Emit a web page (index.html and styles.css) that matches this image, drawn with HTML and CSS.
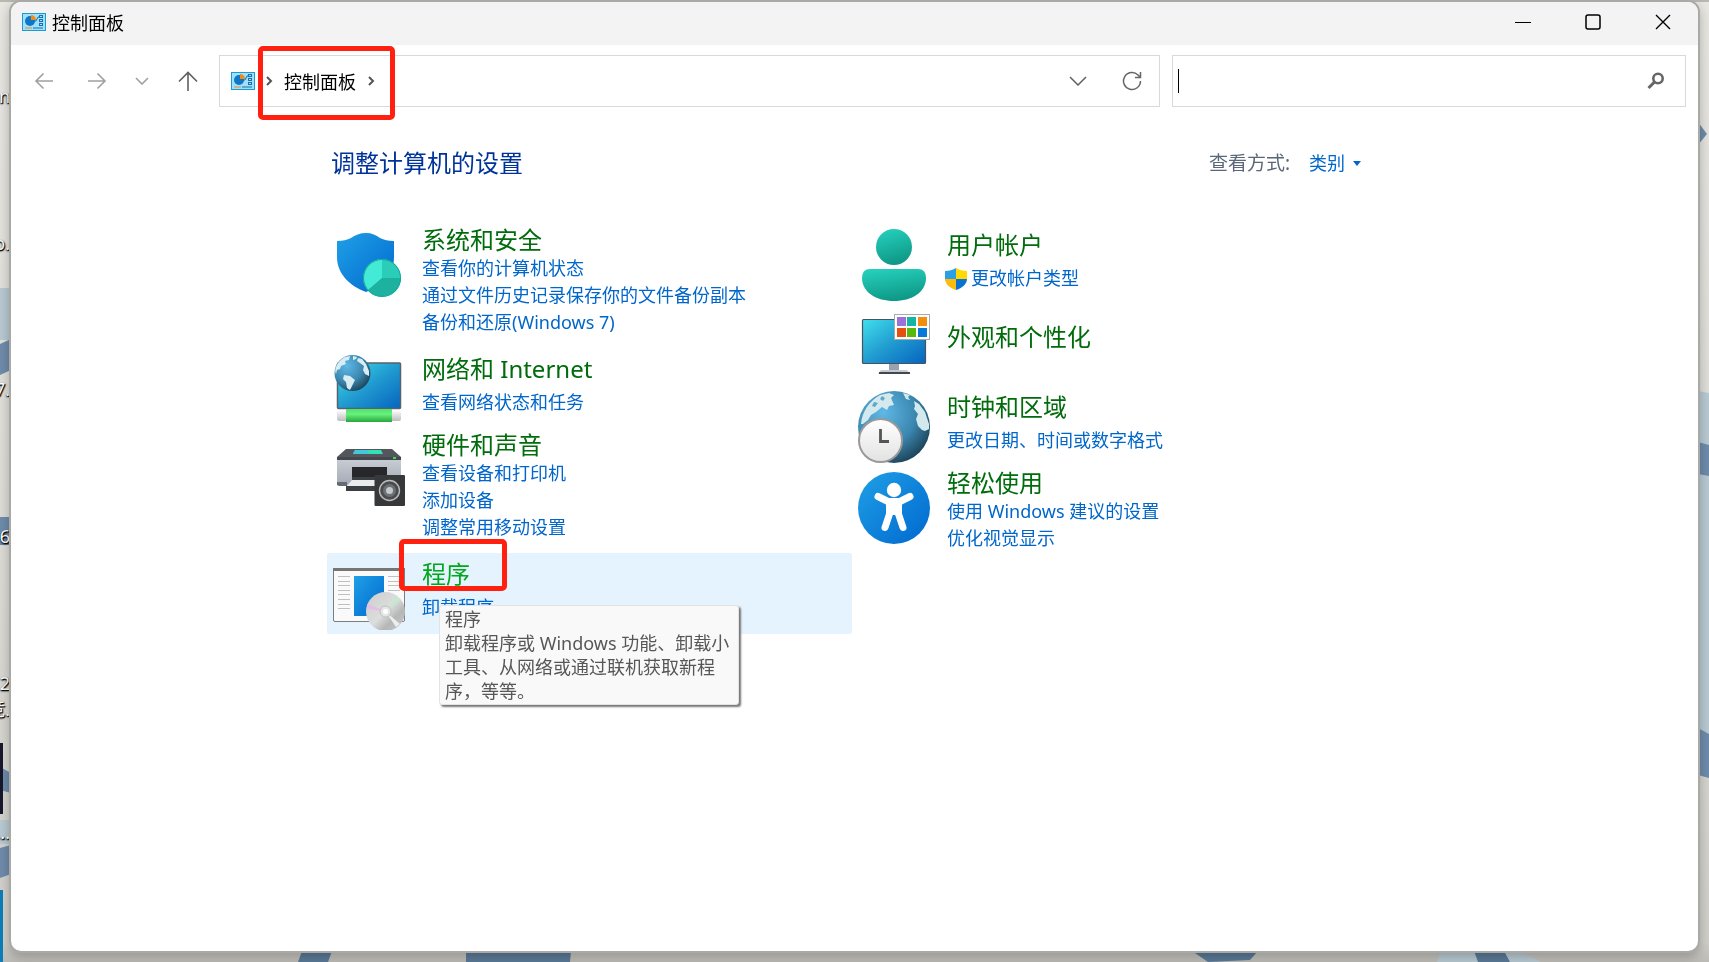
FILE: index.html
```html
<!DOCTYPE html>
<html lang="zh-CN">
<head>
    <meta charset="UTF-8">
    <meta name="viewport" content="width=device-width, initial-scale=1.0">
    <title>控制面板</title>
    <link rel="stylesheet" href="styles.css">
</head>
<body>
    <!-- desktop behind the window -->
    <div class="desktop">
        <svg class="wallpaper" viewBox="0 0 1709 962" preserveAspectRatio="none" aria-hidden="true">
            <path d="M0 0h1709v2H0z" fill="#b9b8b2"/>
            <g fill="#7b8b9b">
                <path d="M280 0h27v3h-31zM1135 0h40v3h-38zM1450 0h36l-6 3h-32zM1541 0h32l2 3h-30z"/>
            </g>
            <path d="M550 0h80v3h-80z" fill="#b79c9b"/>
            <path d="M1193 0h94v3h-94zM1395 0h30v3h-30z" fill="#b5b193"/>
            <path d="M0 288h11v52H0zM0 820h11v24H0zM1698 391l11 2v352h-11zM1441 951h78l22 11h-104z" fill="#b9cad3"/>
            <g fill="#6f8cab">
                <path d="M0 344l11-5v31l-11 5zM0 517h11v28H0zM0 767l11 6v20l-11-3zM0 848l11-3v29l-11 4z"/>
                <path d="M1698 122l9 12-9 11zM1698 442l11 3v31l-11-2zM1698 728l11 6v44l-11-3z"/>
                <path d="M302 951h30l-4 11h-30zM466 951h105l-1 11H466zM1192 951h66l-8 9-42 2zM1474 951h30l6 11h-32z" fill="#5b7a98"/>
            </g>
            <path d="M0 743h3v71H0z" fill="#17182c"/>
            <path d="M0 890h3v72H0z" fill="#0c7fb8"/>
        </svg>
        <span class="desktop-label label-1">n</span>
        <span class="desktop-label label-2">o.</span>
        <span class="desktop-label label-3">7.</span>
        <span class="desktop-label label-4">6</span>
        <span class="desktop-label label-5">2</span>
        <span class="desktop-label label-6">竞.</span>
        <span class="desktop-label label-7">...</span>
    </div>

    <!-- shared icons -->
    <svg class="defs" aria-hidden="true">
        <defs>
            <linearGradient id="blue" x1="0" y1="0" x2="1" y2="1">
                <stop offset="0" stop-color="#1fa0e6"/>
                <stop offset="1" stop-color="#0068cf"/>
            </linearGradient>
            <linearGradient id="screen" x1="0" y1="0" x2="1" y2="1">
                <stop offset="0" stop-color="#3fe0ec"/>
                <stop offset="0.5" stop-color="#219bd0"/>
                <stop offset="1" stop-color="#0564c0"/>
            </linearGradient>
            <linearGradient id="teal" x1="0" y1="0" x2="0.3" y2="1">
                <stop offset="0" stop-color="#27d3c0"/>
                <stop offset="1" stop-color="#0f9a88"/>
            </linearGradient>
            <radialGradient id="sea" cx="0.35" cy="0.3" r="0.75">
                <stop offset="0" stop-color="#5fb8e6"/>
                <stop offset="0.6" stop-color="#3b87b0"/>
                <stop offset="1" stop-color="#1d4459"/>
            </radialGradient>
            <linearGradient id="pipe" x1="0" y1="0" x2="0" y2="1">
                <stop offset="0" stop-color="#54e070"/>
                <stop offset="0.4" stop-color="#66f27c"/>
                <stop offset="1" stop-color="#28a63c"/>
            </linearGradient>
            <linearGradient id="metal" x1="0" y1="0" x2="0" y2="1">
                <stop offset="0" stop-color="#ffffff"/>
                <stop offset="1" stop-color="#bdbdbd"/>
            </linearGradient>
            <linearGradient id="face" x1="0" y1="0" x2="0" y2="1">
                <stop offset="0" stop-color="#ffffff"/>
                <stop offset="1" stop-color="#e2e2e2"/>
            </linearGradient>
            <linearGradient id="grey" x1="0" y1="0" x2="0" y2="1">
                <stop offset="0" stop-color="#c9ced6"/>
                <stop offset="1" stop-color="#a3a9b3"/>
            </linearGradient>
            <linearGradient id="disc" x1="0" y1="0" x2="1" y2="1">
                <stop offset="0" stop-color="#cccccc"/>
                <stop offset="0.5" stop-color="#dcdedd"/>
                <stop offset="0.7" stop-color="#b4b7b6"/>
                <stop offset="1" stop-color="#c9cbca"/>
            </linearGradient>
            <symbol id="cpanel" viewBox="0 0 24 18">
                <rect x="0.5" y="0.5" width="23" height="17" fill="#9fe0fa" stroke="#1c9ad6"/>
                <circle cx="8" cy="8" r="5" fill="#0f77c8"/>
                <path d="M9 7V2a5 5 0 0 1 5 5z" fill="#f08c14"/>
                <path d="M12 8h2l2-4h1" fill="none" stroke="#1c6fae"/>
                <g fill="none" stroke="#1c6fae">
                    <rect x="17.5" y="2.5" width="3" height="2"/>
                    <rect x="17.5" y="6.5" width="3" height="2"/>
                    <rect x="17.5" y="10.5" width="3" height="2"/>
                </g>
                <path d="M3 15h7" stroke="#f08c14"/>
                <path d="M11 15h10" stroke="#1c6fae"/>
            </symbol>
        </defs>
    </svg>

    <div class="window">
        <header class="titlebar">
            <svg class="cpanel-icon" aria-hidden="true"><use href="#cpanel"/></svg>
            <span class="window-title">控制面板</span>
            <div class="window-buttons">
                <button type="button" aria-label="最小化">
                    <svg width="16" height="16"><path d="M0 8.5h16" stroke="#000"/></svg>
                </button>
                <button type="button" aria-label="最大化">
                    <svg width="16" height="16"><rect x="1" y="1" width="14" height="14" rx="2" fill="none" stroke="#000" stroke-width="1.5"/></svg>
                </button>
                <button type="button" aria-label="关闭">
                    <svg width="16" height="16"><path d="M1 1l14 14M15 1L1 15" stroke="#000" stroke-width="1.4"/></svg>
                </button>
            </div>
        </header>

        <nav class="toolbar">
            <div class="nav-buttons">
                <button type="button" class="nav-back" aria-label="后退">
                    <svg width="20" height="18"><path d="M19 9H2M9.500 1.500L2 9l7.500 7.500" fill="none" stroke="#a0a0a0" stroke-width="1.600"/></svg>
                </button>
                <button type="button" class="nav-forward" aria-label="前进">
                    <svg width="20" height="18"><path d="M1 9h17M10.500 1.500L18 9l-7.500 7.500" fill="none" stroke="#a0a0a0" stroke-width="1.600"/></svg>
                </button>
                <button type="button" class="nav-recent" aria-label="最近浏览的位置">
                    <svg width="14" height="8"><path d="M1 1l6 6 6-6" fill="none" stroke="#a0a0a0" stroke-width="1.600"/></svg>
                </button>
                <button type="button" class="nav-up" aria-label="上移">
                    <svg width="20" height="20"><path d="M10 20V2M1 10.500L10 1.500l9 9" fill="none" stroke="#606060" stroke-width="1.600"/></svg>
                </button>
            </div>
            <div class="address">
                <svg class="cpanel-icon" aria-hidden="true"><use href="#cpanel"/></svg>
                <div class="crumbs">
                    <svg width="8" height="12"><path d="M2 2L6 6l-4 4" fill="none" stroke="#555" stroke-width="2"/></svg>
                    <a href="#">控制面板</a>
                    <svg width="8" height="12"><path d="M2 2L6 6l-4 4" fill="none" stroke="#555" stroke-width="2"/></svg>
                    <span class="mark"></span>
                </div>
                <button type="button" class="address-list" aria-label="以前的位置">
                    <svg width="18" height="10"><path d="M1 1l8 8 8-8" fill="none" stroke="#606060" stroke-width="1.500"/></svg>
                </button>
                <button type="button" class="address-refresh" aria-label="刷新">
                    <svg width="20" height="20"><path d="M18.500 10a8.500 8.500 0 1 1-2.500-6l2 2M18.500 1v5.500H13" fill="none" stroke="#666" stroke-width="1.500"/></svg>
                </button>
            </div>
            <div class="search">
                <span class="caret"></span>
                <input type="text" aria-label="搜索控制面板">
                <svg width="18" height="18" aria-hidden="true"><circle cx="11" cy="6.500" r="4.700" fill="none" stroke="#666" stroke-width="2.600"/><path d="M7.500 10L1.500 16" stroke="#666" stroke-width="3"/></svg>
            </div>
        </nav>

        <main class="content">
            <div class="heading">
                <h1>调整计算机的设置</h1>
                <div class="view-by">
                    <label for="view">查看方式:</label>
                    <select id="view">
                        <option>类别</option>
                    </select>
                    <svg width="8" height="5" aria-hidden="true"><path d="M0 0h8L4 5z" fill="#0066cc"/></svg>
                </div>
            </div>

            <div class="categories">
                <div class="column">
                    <section class="category">
                        <svg class="category-icon" viewBox="0 0 72 72" aria-hidden="true">
                            <path d="M33 4c6 0 10 2 14 5 4 2 8 3 14 3v16c0 17-12 29-28 35C17 57 4 45 4 28V12c6 0 10-1 14-3 4-3 9-5 15-5z" fill="url(#blue)"/>
                            <circle cx="49" cy="49" r="19" fill="#2bcdb9"/>
                            <path d="M49 49V30a19 19 0 0 0-14 31z" fill="#43ead6"/>
                            <path d="M49 49h19a19 19 0 0 1-33 12z" fill="#1cb29f"/>
                            <circle cx="49" cy="49" r="18.500" fill="none" stroke="#1ba795"/>
                        </svg>
                        <div class="category-text">
                            <h2><a href="#">系统和安全</a></h2>
                            <a href="#">查看你的计算机状态</a>
                            <a href="#">通过文件历史记录保存你的文件备份副本</a>
                            <a href="#">备份和还原(Windows 7)</a>
                        </div>
                    </section>

                    <section class="category single">
                        <svg class="category-icon" viewBox="0 0 72 72" aria-hidden="true">
                            <rect x="4.500" y="10" width="63" height="45.500" rx="1" fill="url(#screen)" stroke="#56636c" stroke-width="1.500"/>
                            <rect x="4" y="57" width="64" height="11" rx="2" fill="url(#metal)"/>
                            <rect x="13" y="56" width="46" height="13" fill="url(#pipe)"/>
                            <circle cx="19.500" cy="20" r="18" fill="url(#sea)"/>
                            <path d="M3 14c2-5 5-8 9-10l5-1-1 4-4 1 1 3-5 2-1 3-3 1-1 4c-1-2-1-4 0-7zM20 3l4 1-1 2-3 1zM25 5l4 1 4 5 3 7 0 5-4-2-2-4 1-4-4-3-3-2zM11 22l6 1 5 4-2 4-3 6-3-2-1-6-3-3z" fill="#d9ecf3"/>
                        </svg>
                        <div class="category-text">
                            <h2><a href="#">网络和 Internet</a></h2>
                            <a href="#">查看网络状态和任务</a>
                        </div>
                    </section>

                    <section class="category">
                        <svg class="category-icon" viewBox="0 0 72 72" aria-hidden="true">
                            <path d="M4 24h64v25l-3 3H7l-3-3z" fill="url(#grey)"/>
                            <path d="M4 48h10v4H6l-2-1z" fill="#666b73"/>
                            <path d="M13 15h46l9 8v3H4v-3z" fill="#53575d"/>
                            <path d="M22 16h26l2 4H20z" fill="#36e0b5"/>
                            <path d="M22 16h13l1 4H20z" fill="#42c8d8"/>
                            <path d="M4 23h64v3H4z" fill="#44474d"/>
                            <rect x="60" y="23" width="3" height="2" fill="#37e32b"/>
                            <path d="M19 33h35v15H19z" fill="#25272b"/>
                            <path d="M19 43h35v4H19z" fill="#3c3f44"/>
                            <path d="M19 46h24v7H13z" fill="#e9ebed"/>
                            <path d="M13 52h30v5H13z" fill="#3b3e43"/>
                            <rect x="41.500" y="41" width="30.500" height="31" rx="1" fill="#37383a"/>
                            <circle cx="56.500" cy="56.500" r="10" fill="#4a4b4d" stroke="#b9bcbf" stroke-width="1.400"/>
                            <circle cx="56.500" cy="56.500" r="6.500" fill="#6c7075"/>
                            <circle cx="56.500" cy="56.500" r="3.500" fill="#c3c8cd"/>
                        </svg>
                        <div class="category-text">
                            <h2><a href="#">硬件和声音</a></h2>
                            <a href="#">查看设备和打印机</a>
                            <a href="#">添加设备</a>
                            <a href="#">调整常用移动设置</a>
                        </div>
                    </section>

                    <section class="category single active">
                        <svg class="category-icon" viewBox="0 0 72 72" aria-hidden="true">
                            <rect x="0.500" y="10.500" width="71" height="53" rx="1.500" fill="#fafafa" stroke="#7d7d7d"/>
                            <path d="M0 10h72v3H0z" fill="#757575"/>
                            <path d="M5 18.500h12M5 23.500h12M5 27.500h12M5 32.500h12M5 36.500h12M5 41.500h12M5 46.500h12M5 50.500h12M55 18.500h12M55 23.500h12M55 27.500h12M55 32.500h12" stroke="#c0c0c0"/>
                            <rect x="21" y="18" width="30" height="40" fill="url(#blue)"/>
                            <circle cx="52.500" cy="53.500" r="19.500" fill="url(#disc)"/>
                            <path d="M52 53L34 46v5z" fill="#e5bde5"/>
                            <path d="M53 53l11-14 3 3z" fill="#bdecc8"/>
                            <path d="M53 54l14 12-4 3z" fill="#eeeeee"/>
                            <circle cx="52.500" cy="53.500" r="5.500" fill="#e6e6e6" stroke="#bdbdbd"/>
                            <circle cx="52.500" cy="53.500" r="2.500" fill="#fff"/>
                        </svg>
                        <div class="category-text">
                            <h2><a href="#">程序</a></h2>
                            <a href="#">卸载程序</a>
                            <span class="mark"></span>
                            <div class="tooltip" role="tooltip">程序<br>卸载程序或 Windows 功能、卸载小<br>工具、从网络或通过联机获取新程<br>序，等等。</div>
                        </div>
                    </section>
                </div>

                <div class="column">
                    <section class="category single">
                        <svg class="category-icon" viewBox="0 0 72 72" aria-hidden="true">
                            <circle cx="36" cy="18" r="18" fill="url(#teal)"/>
                            <path d="M12 40h48q8 0 8 9c0 14-14 23-32 23S4 63 4 49q0-9 8-9z" fill="url(#teal)"/>
                        </svg>
                        <div class="category-text">
                            <h2><a href="#">用户帐户</a></h2>
                            <a href="#" class="with-shield">
                                <svg width="22" height="22" aria-hidden="true">
                                    <path d="M11 0C8 2 4 3 0 3v8h11z" fill="#2a9fe6"/>
                                    <path d="M11 0c3 2 7 3 11 3v8H11z" fill="#ffd900"/>
                                    <path d="M0 11c0 5 5 9 11 11V11z" fill="#fcbc0b"/>
                                    <path d="M22 11c0 5-5 9-11 11V11z" fill="#0b72cf"/>
                                </svg>更改帐户类型</a>
                        </div>
                    </section>

                    <section class="category bare">
                        <svg class="category-icon" viewBox="0 0 72 72" aria-hidden="true">
                            <path d="M31 54h10v7H31z" fill="#9aa3ad"/>
                            <path d="M23 60h26l3 4H20z" fill="#c4cad0"/>
                            <path d="M21 62h31v2H21z" fill="#3f4850"/>
                            <rect x="4.500" y="9.500" width="63" height="44" rx="1" fill="url(#screen)" stroke="#47545d" stroke-width="1.200"/>
                            <rect x="36.500" y="4.500" width="35" height="25" fill="#fff" stroke="#a9a9a9"/>
                            <path d="M39 7h9v9h-9z" fill="#9d72d8"/>
                            <path d="M49 7h9v9h-9z" fill="#16b5a2"/>
                            <path d="M60 7h9v9h-9z" fill="#f28d0d"/>
                            <path d="M39 18h9v9h-9z" fill="#e35010"/>
                            <path d="M49 18h9v9h-9z" fill="#59b80c"/>
                            <path d="M60 18h9v9h-9z" fill="#0879d6"/>
                        </svg>
                        <div class="category-text">
                            <h2><a href="#">外观和个性化</a></h2>
                        </div>
                    </section>

                    <section class="category single">
                        <svg class="category-icon" viewBox="0 0 72 72" aria-hidden="true">
                            <circle cx="36" cy="36" r="36" fill="url(#sea)"/>
                            <path d="M3 33C4 21 11 10 22 4l9-2 5 2-3 3 3 7-5 1-2 4-5-3-6 5-5 3-3 5-5 4zM45 2l7 2-2 2 2 3-4-1zM56 10l5 3 6 8 4 12 0 5-4 2-3-1-4-4-2-7 2-5-4-5 1-3z" fill="#d3e9ee"/>
                            <path d="M24 5l3 2-2 3-3-2zM16 11l4 1-3 4-3-1z" fill="#5fa8c8"/>
                            <circle cx="22.500" cy="49.500" r="21.500" fill="url(#face)" stroke="#999" stroke-width="2"/>
                            <path d="M22.500 38v12.500H31" fill="none" stroke="#555" stroke-width="2.800"/>
                        </svg>
                        <div class="category-text">
                            <h2><a href="#">时钟和区域</a></h2>
                            <a href="#">更改日期、时间或数字格式</a>
                        </div>
                    </section>

                    <section class="category">
                        <svg class="category-icon" viewBox="0 0 72 72" aria-hidden="true">
                            <circle cx="36" cy="36" r="36" fill="url(#blue)"/>
                            <circle cx="36" cy="18" r="7.200" fill="#fff"/>
                            <path d="M20 24.500l10 5h12l10-5" fill="none" stroke="#fff" stroke-width="7" stroke-linecap="round" stroke-linejoin="round"/>
                            <path d="M28 28h16v15H28z" fill="#fff"/>
                            <path d="M31.500 42L27 55.500M40.500 42L45 55.500" stroke="#fff" stroke-width="7" stroke-linecap="round"/>
                        </svg>
                        <div class="category-text">
                            <h2><a href="#">轻松使用</a></h2>
                            <a href="#">使用 Windows 建议的设置</a>
                            <a href="#">优化视觉显示</a>
                        </div>
                    </section>
                </div>
            </div>
        </main>
    </div>
</body>
</html>
```
FILE: styles.css
```css
* {
    box-sizing: border-box;
}
body {
    margin: 0;
    padding: 0 9px 9px;
    font-family: "Noto Sans", "Noto Sans CJK SC", sans-serif;
    font-size: 18px;
    background: #dddbd6;
}
a {
    color: #0066cc;
    text-decoration: none;
}
button {
    display: flex;
    align-items: center;
    justify-content: center;
    padding: 0;
    border: 0;
    background: none;
}
.defs {
    position: absolute;
    width: 0;
    height: 0;
}

/* desktop */
.desktop {
    position: fixed;
    inset: 0;
    overflow: hidden;
    background: linear-gradient(#e9e7e2, #dddbd6 60%, #d0cfca 98%, #bcbbb6);
}
.wallpaper {
    width: 100%;
    height: 100%;
}
.desktop-label {
    position: absolute;
    right: calc(100% - 10px);
    color: #fff;
    font-size: 18px;
    line-height: 20px;
    white-space: nowrap;
    text-shadow: 0 1px 2px #000, 1px 1px 1px #000;
}
.label-1 { top: 86px; }
.label-2 { top: 233px; }
.label-3 { top: 379px; }
.label-4 { top: 526px; }
.label-5 { top: 673px; }
.label-6 { top: 699px; }
.label-7 { top: 822px; }

/* window */
.window {
    position: relative;
    min-height: calc(100vh - 9px);
    border: 2px solid #a9a9a6;
    border-radius: 12px;
    background: #fff;
    box-shadow: 0 4px 12px rgba(0, 0, 0, 0.25);
}
.titlebar {
    display: flex;
    align-items: center;
    height: 43px;
    padding: 0 0 3px 11px;
    border-radius: 10px 10px 0 0;
    background: #f3f3f3;
}
.cpanel-icon {
    flex: none;
    width: 24px;
    height: 18px;
}
.window-title {
    margin-left: 6px;
    color: #000;
}
.window-buttons {
    display: flex;
    margin-left: auto;
}
.window-buttons button {
    width: 70px;
    height: 40px;
}

/* toolbar */
.toolbar {
    display: grid;
    grid-template-columns: auto 953fr 514fr;
    padding: 10px 12px 0 6px;
}
.nav-buttons {
    display: flex;
    margin-right: 3px;
}
.nav-back,
.nav-forward {
    width: 53px;
}
.nav-recent {
    width: 37px;
}
.nav-up {
    width: 56px;
}
.address,
.search {
    display: flex;
    align-items: center;
    height: 52px;
    border: 1px solid #d9d9d9;
}
.address {
    margin-right: 12px;
    padding-left: 11px;
}
.crumbs {
    position: relative;
    display: flex;
    align-items: center;
    gap: 11px;
    height: 50px;
    margin: 0 auto 0 10px;
}
.crumbs a {
    color: #000;
}
.mark {
    position: absolute;
    border: 5px solid #ff2010;
    border-radius: 5px;
    pointer-events: none;
}
.crumbs .mark {
    inset: -10px -20px -14px -7px;
}
.address button {
    width: 54px;
    height: 50px;
}
.search {
    padding: 0 20px 0 5px;
}
.caret {
    width: 1px;
    height: 24px;
    background: #000;
}
.search input {
    flex: 1;
    min-width: 0;
    height: 40px;
    padding: 0 4px;
    border: 0;
    outline: 0;
    font: inherit;
}

/* content */
.content {
    max-width: 1055px;
    margin: 0 auto;
    padding: 38px 5px 40px 0;
}
.heading {
    display: flex;
    align-items: center;
    justify-content: space-between;
    padding: 0 16px 0 4px;
}
h1,
h2 {
    margin: 0;
    font-size: 24px;
    font-weight: 400;
}
h1 {
    line-height: 36px;
    color: #003399;
}
.view-by {
    display: flex;
    align-items: center;
}
.view-by label {
    color: #5a6778;
    font-size: 19px;
    line-height: 24px;
}
.view-by select {
    appearance: none;
    margin: 0 8px 0 19px;
    padding: 0;
    border: 0;
    background: none;
    color: #0066cc;
    font: inherit;
}
.categories {
    display: flex;
    margin-top: 43px;
}
.column {
    flex: 1;
}
.category {
    display: flex;
    gap: 17px;
    min-height: 81px;
    padding: 0 6px;
    border-radius: 2px;
}
.category-icon {
    flex: none;
    width: 72px;
    height: 72px;
    margin-top: 5px;
}
.category-text {
    position: relative;
    display: flex;
    flex-direction: column;
    align-items: flex-start;
    padding: 1px 0 12px;
    line-height: 27px;
}
.category-text h2 {
    line-height: 30px;
}
.category-text h2 a {
    color: #006c0b;
}
.single .category-text {
    padding: 6px 0 13px;
}
.single h2 {
    margin-bottom: 5px;
}
.bare .category-text {
    padding-top: 17px;
}
.with-shield {
    display: flex;
    align-items: center;
    gap: 4px;
    margin-left: -2px;
}
.active {
    background: #e5f3ff;
}
.active .category-text h2 a {
    color: #00a81c;
}
.active .mark {
    top: -14px;
    left: -23px;
    width: 108px;
    height: 52px;
}
.tooltip {
    position: absolute;
    top: 52px;
    left: 17px;
    z-index: 1;
    padding: 1px 9px 1px 5px;
    border: 1px solid #e3e3e3;
    border-radius: 3px;
    background: #f9f9f9;
    box-shadow: 2px 2px 2px #777;
    color: #575757;
    line-height: 24px;
    white-space: nowrap;
}
```
